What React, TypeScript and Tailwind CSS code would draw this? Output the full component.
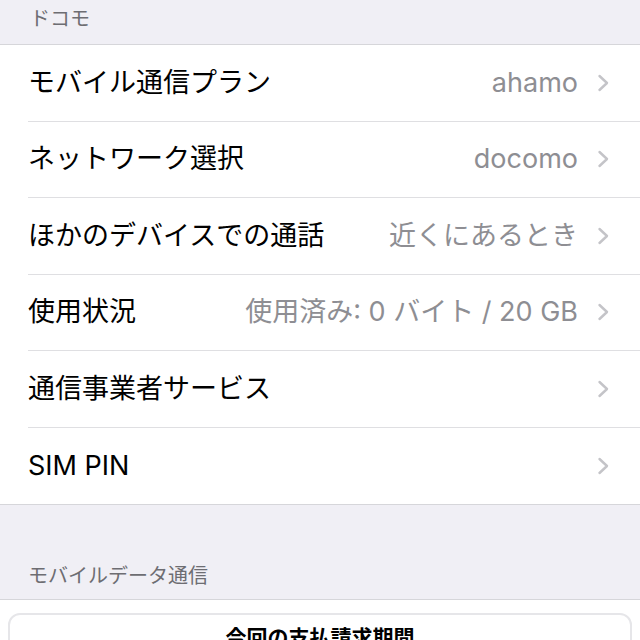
import { ReactNode } from "react";

const font = { fontFamily: '"Inter", "Noto Sans CJK JP", sans-serif' };

function Chevron() {
  return (
    <svg width="13" height="18" viewBox="0 0 13 18" className="shrink-0">
      <path d="M2.5 2 L10 9 L2.5 16" fill="none" stroke="#c4c4c8" strokeWidth="2.4" strokeLinecap="round" strokeLinejoin="round" />
    </svg>
  );
}

function Row({ label, value, last }: { label: string; value?: ReactNode; last?: boolean }) {
  return (
    <div className="pl-[28px]">
      <div className={`h-[76.5px] flex items-center pr-[30px] ${last ? "" : "border-b border-[#dfdfe2]"}`}>
        <span className="text-[27px] text-black leading-[38px] flex-1 whitespace-nowrap">{label}</span>
        {value && <span className="text-[27px] text-[#8e8e93] leading-[38px] mr-[19px] whitespace-nowrap">{value}</span>}
        <Chevron />
      </div>
    </div>
  );
}

export default function App() {
  const rows = [
    { label: "モバイル通信プラン", value: "ahamo" },
    { label: "ネットワーク選択", value: "docomo" },
    { label: "ほかのデバイスでの通話", value: "近くにあるとき" },
    { label: "使用状況", value: "使用済み: 0 バイト / 20 GB" },
    { label: "通信事業者サービス" },
    { label: "SIM PIN" },
  ];
  return (
    <div className="w-[640px] h-[640px] overflow-hidden bg-white" style={font}>
      <div className="h-[45px] bg-[#f0eff5] pl-[30px] pt-[5px] border-b border-[#d6d6da]">
        <span className="text-[20px] leading-[28px] text-[#6d6d72]">ドコモ</span>
      </div>
      <div className="bg-white">
        {rows.map((r, i) => (
          <Row key={r.label} label={r.label} value={r.value} last={i === rows.length - 1} />
        ))}
      </div>
      <div className="h-[96px] bg-[#f0eff5] border-y border-[#d6d6da] pl-[28px] pb-[9px] flex items-end">
        <span className="text-[20px] leading-[28px] text-[#6d6d72]">モバイルデータ通信</span>
      </div>
      <div className="px-[8px] pt-[13px]">
        <div className="border-2 border-[#e6e6e9] rounded-[12px] pt-[8px] h-[120px]">
          <div className="text-center text-[21px] leading-[30px] font-bold text-black">今回の支払請求期間</div>
        </div>
      </div>
    </div>
  );
}
